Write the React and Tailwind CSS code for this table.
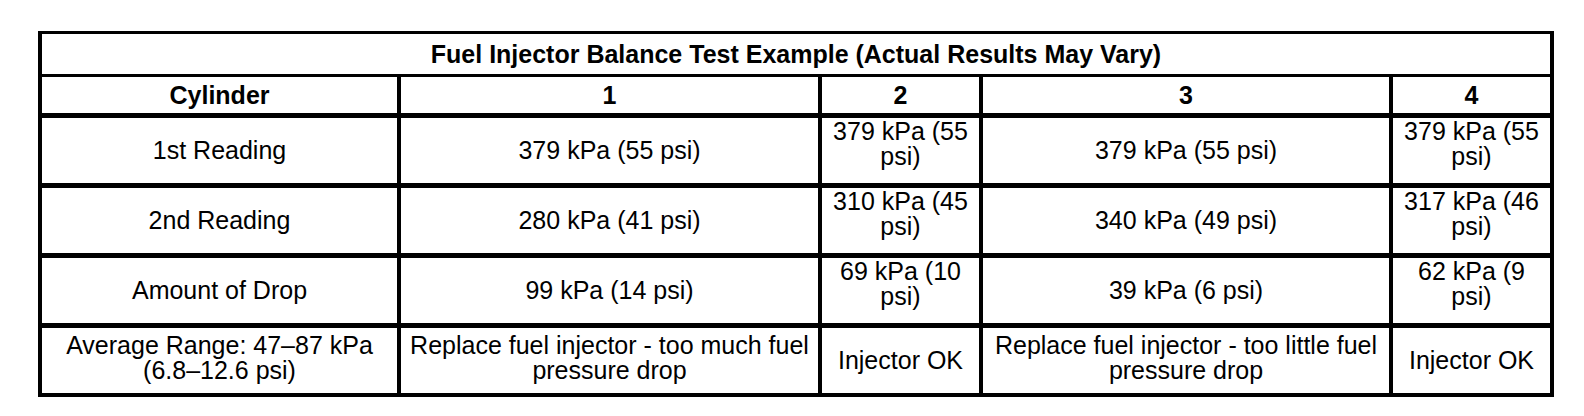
import React from "react";

const cols = "grid grid-cols-[355px_417px_157px_406px_157px] gap-x-[4px]";

const rows = [
  ["1st Reading", "379 kPa (55 psi)", "379 kPa (55 psi)", "379 kPa (55 psi)", "379 kPa (55 psi)"],
  ["2nd Reading", "280 kPa (41 psi)", "310 kPa (45 psi)", "340 kPa (49 psi)", "317 kPa (46 psi)"],
  ["Amount of Drop", "99 kPa (14 psi)", "69 kPa (10 psi)", "39 kPa (6 psi)", "62 kPa (9 psi)"],
  [
    "Average Range: 47\u201387 kPa (6.8\u201312.6 psi)",
    "Replace fuel injector - too much fuel pressure drop",
    "Injector OK",
    "Replace fuel injector - too little fuel pressure drop",
    "Injector OK",
  ],
];

export default function App() {
  return (
    <div className="w-[1584px] h-[416px] bg-white pt-[31px] pl-[38px] text-black font-['Liberation_Sans',Arial,sans-serif] text-[25px] leading-[25px]">
      <div className="w-[1516px] bg-black px-[4px] pt-[3px] pb-[4px] flex flex-col">
        <div className="h-[40px] bg-white flex items-center justify-center font-bold">
          Fuel Injector Balance Test Example (Actual Results May Vary)
        </div>
        <div className={`${cols} mt-[3px] h-[36px]`}>
          {["Cylinder", "1", "2", "3", "4"].map((h) => (
            <div key={h} className="bg-white flex items-center justify-center font-bold">
              {h}
            </div>
          ))}
        </div>
        {rows.map((r, i) => (
          <div key={i} className={`${cols} mt-[5px] h-[65px]`}>
            {r.map((c, j) => {
              // narrow number cells wrap to two lines and sit higher
              let pad = "";
              if (i < 3 && (j === 2 || j === 4)) pad = "pb-[14px]";
              if (i === 3 && j !== 2 && j !== 4) pad = "pb-[6px]";
              return (
                <div key={j} className={`bg-white flex items-center justify-center text-center px-[6px] ${pad}`}>
                  {c}
                </div>
              );
            })}
          </div>
        ))}
      </div>
    </div>
  );
}
